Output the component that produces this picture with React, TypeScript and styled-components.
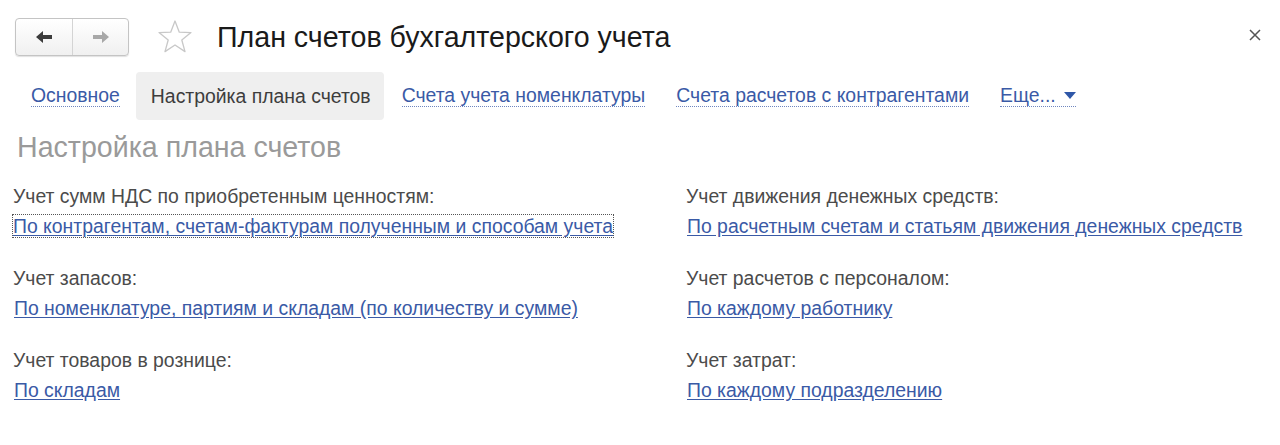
import React from "react";
import styled, { createGlobalStyle } from "styled-components";

const GlobalStyle = createGlobalStyle`
  body {
    margin: 0;
    background: #fff;
    font-family: "Liberation Sans", Arial, sans-serif;
  }
`;

const Page = styled.div`
  width: 1280px;
  height: 445px;
  overflow: hidden;
  background: #fff;
`;

const Header = styled.div`
  display: flex;
  align-items: center;
  height: 38px;
  padding: 18px 0 0 15px;
`;

const NavGroup = styled.div`
  display: flex;
  height: 36px;
  border: 1px solid #c4c4c4;
  border-radius: 4px;
  background: linear-gradient(#ffffff, #f0f0f0);
  box-shadow: 0 1px 1px rgba(0, 0, 0, 0.12);
  overflow: hidden;
`;

const NavButton = styled.button<{ $muted?: boolean }>`
  width: 56px;
  border: none;
  background: transparent;
  display: flex;
  align-items: center;
  justify-content: center;
  padding: 0;
  color: ${(p) => (p.$muted ? "#a8a8a8" : "#3c3c3c")};
  & + & {
    border-left: 1px solid #d4d4d4;
  }
`;

const Star = styled.div`
  margin-left: 27px;
  width: 38px;
  height: 38px;
  display: flex;
  align-items: center;
  justify-content: center;
`;

const Title = styled.h1`
  margin: 0 0 0 23px;
  font-size: 28.6px;
  font-weight: normal;
  color: #1a1a1a;
  flex: 1;
`;

const Close = styled.div`
  width: 20px;
  margin-right: 15px;
  margin-top: -4px;
  display: flex;
  justify-content: center;
`;

const Tabs = styled.div`
  display: flex;
  align-items: stretch;
  height: 48px;
  margin: 16px 0 0 16px;
`;

const Tab = styled.div<{ $active?: boolean }>`
  display: flex;
  align-items: center;
  padding: 0 13px 0 15px;
  margin-right: 3px;
  border-radius: 4px;
  font-size: 19.4px;
  background: ${(p) => (p.$active ? "#efefef" : "transparent")};
  color: ${(p) => (p.$active ? "#3d3d3d" : "#3a5aa6")};
`;

const TabLink = styled.span`
  border-bottom: 1px dotted #6f86bf;
  line-height: 21px;
  display: inline-flex;
  align-items: center;
  gap: 8px;
`;

const Triangle = styled.span`
  width: 0;
  height: 0;
  border-left: 6px solid transparent;
  border-right: 6px solid transparent;
  border-top: 7px solid #2f57a8;
`;

const Heading = styled.h2`
  margin: 11px 0 0 17px;
  font-size: 28.6px;
  font-weight: normal;
  color: #9a9a9a;
  line-height: 32px;
`;

const Columns = styled.div`
  display: grid;
  grid-template-columns: 673px 1fr;
  padding: 22px 0 0 13px;
`;

const Column = styled.div`
  display: flex;
  flex-direction: column;
  gap: 30px;
`;

const Field = styled.div`
  display: flex;
  flex-direction: column;
  gap: 8px;
`;

const Label = styled.div`
  font-size: 19.4px;
  line-height: 22px;
  color: #4b4b4b;
`;

const ValueLink = styled.a<{ $focused?: boolean }>`
  align-self: flex-start;
  font-size: 19.4px;
  line-height: 22px;
  color: #3a5aa6;
  text-decoration: underline;
  text-underline-offset: 2px;
  margin-left: ${(p) => (p.$focused ? "0" : "1px")};
  outline: ${(p) => (p.$focused ? "1px dotted #555" : "none")};
  outline-offset: 0;
  cursor: pointer;
`;

type FieldItem = { label: string; value: string; focused?: boolean };

const left: FieldItem[] = [
  {
    label: "Учет сумм НДС по приобретенным ценностям:",
    value: "По контрагентам, счетам-фактурам полученным и способам учета",
    focused: true,
  },
  { label: "Учет запасов:", value: "По номенклатуре, партиям и складам (по количеству и сумме)" },
  { label: "Учет товаров в рознице:", value: "По складам" },
];

const right: FieldItem[] = [
  { label: "Учет движения денежных средств:", value: "По расчетным счетам и статьям движения денежных средств" },
  { label: "Учет расчетов с персоналом:", value: "По каждому работнику" },
  { label: "Учет затрат:", value: "По каждому подразделению" },
];

const tabs = [
  "Основное",
  "Настройка плана счетов",
  "Счета учета номенклатуры",
  "Счета расчетов с контрагентами",
];

function FieldList({ items }: { items: FieldItem[] }) {
  return (
    <Column>
      {items.map((f) => (
        <Field key={f.label}>
          <Label>{f.label}</Label>
          <ValueLink $focused={f.focused}>{f.value}</ValueLink>
        </Field>
      ))}
    </Column>
  );
}

export default function App() {
  return (
    <Page>
      <GlobalStyle />
      <Header>
        <NavGroup>
          <NavButton>
            <svg width="18" height="14" viewBox="0 0 18 14">
              <path d="M1 7 L8 1 L8 5 L17 5 L17 9 L8 9 L8 13 Z" fill="currentColor" />
            </svg>
          </NavButton>
          <NavButton $muted>
            <svg width="18" height="14" viewBox="0 0 18 14">
              <path d="M17 7 L10 1 L10 5 L1 5 L1 9 L10 9 L10 13 Z" fill="currentColor" />
            </svg>
          </NavButton>
        </NavGroup>
        <Star>
          <svg width="36" height="36" viewBox="0 0 36 36">
            <path
              d="M18 2 L22.3 13.2 L34 13.6 L24.8 21 L28 32.6 L18 26 L8 32.6 L11.2 21 L2 13.6 L13.7 13.2 Z"
              fill="none"
              stroke="#c8c8c8"
              strokeWidth="1.3"
              strokeLinejoin="round"
            />
          </svg>
        </Star>
        <Title>План счетов бухгалтерского учета</Title>
        <Close>
          <svg width="12" height="12" viewBox="0 0 12 12">
            <path d="M1 1 L11 11 M11 1 L1 11" stroke="#555" strokeWidth="1.5" />
          </svg>
        </Close>
      </Header>
      <Tabs>
        {tabs.map((t, i) => (
          <Tab key={t} $active={i === 1}>
            {i === 1 ? t : <TabLink>{t}</TabLink>}
          </Tab>
        ))}
        <Tab>
          <TabLink>
            Еще...
            <Triangle />
          </TabLink>
        </Tab>
      </Tabs>
      <Heading>Настройка плана счетов</Heading>
      <Columns>
        <FieldList items={left} />
        <FieldList items={right} />
      </Columns>
    </Page>
  );
}
